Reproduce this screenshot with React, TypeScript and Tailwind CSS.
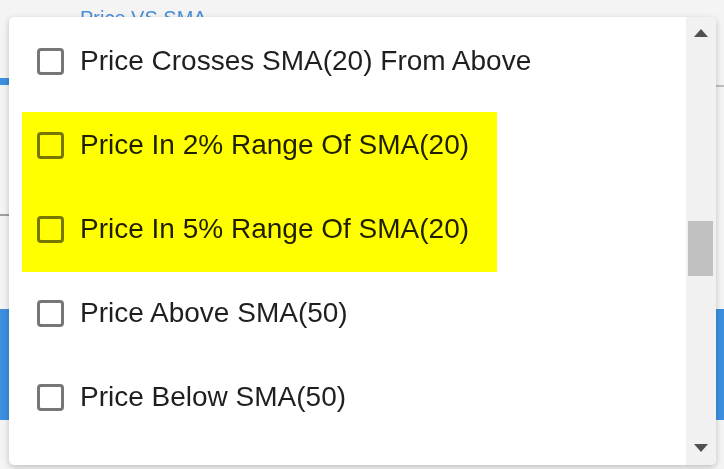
import React from "react";

const items = [
  "Price Crosses SMA(20) From Above",
  "Price In 2% Range Of SMA(20)",
  "Price In 5% Range Of SMA(20)",
  "Price Above SMA(50)",
  "Price Below SMA(50)",
];

export default function App() {
  return (
    <div
      className="relative w-[724px] h-[469px] overflow-hidden bg-[#f4f4f4]"
      style={{ fontFamily: '"Liberation Sans", Arial, sans-serif' }}
    >
      {/* underlying page */}
      <div className="flex flex-col">
        <div className="h-[78px] pl-[80px] pt-[6px] text-[20px] leading-[24px] text-[#4a8fd8]">
          Price VS SMA
        </div>
        <div className="h-[9px] flex">
          <div className="w-[60px] h-[7px] bg-[#3d8fe0]" />
          <div className="flex-1 border-b-[2px] border-[#bdbdbd]" />
        </div>
        <div className="h-[127px]" />
        <div className="w-[40px] h-[2px] bg-[#9e9e9e]" />
        <div className="h-[93px]" />
        <div className="h-[111px] bg-[#3d8fe0]" />
      </div>

      {/* dropdown popup */}
      <div className="absolute left-[9px] top-[17px] w-[707px] h-[448px] bg-white rounded-[5px] shadow-[0_2px_6px_rgba(0,0,0,0.22)] flex overflow-hidden">
        <div className="relative flex-1 pt-[2px]">
          {items.map((t) => (
            <div key={t} className="h-[84px] flex items-center pl-[28px] gap-[16px]">
              <div className="w-[27px] h-[27px] border-[3px] border-[#767676] rounded-[4px] bg-white" />
              <span className="text-[28px] leading-[32px] text-[#1f1f1f]">{t}</span>
            </div>
          ))}
          <div className="absolute left-[13px] top-[95px] w-[475px] h-[160px] bg-[#ffff00] mix-blend-multiply pointer-events-none" />
        </div>
        <div className="w-[30px] bg-[#f1f1f1] flex flex-col items-center">
          <div className="h-[32px] w-full flex items-center justify-center">
            <svg width="14" height="8" viewBox="0 0 14 8">
              <polygon points="7,0 14,8 0,8" fill="#505050" />
            </svg>
          </div>
          <div className="h-[172px]" />
          <div className="w-[25px] h-[55px] bg-[#c1c1c1] -ml-[2px]" />
          <div className="flex-1" />
          <div className="h-[32px] w-full flex items-center justify-center pb-[2px]">
            <svg width="14" height="8" viewBox="0 0 14 8">
              <polygon points="0,0 14,0 7,8" fill="#505050" />
            </svg>
          </div>
        </div>
      </div>
    </div>
  );
}
